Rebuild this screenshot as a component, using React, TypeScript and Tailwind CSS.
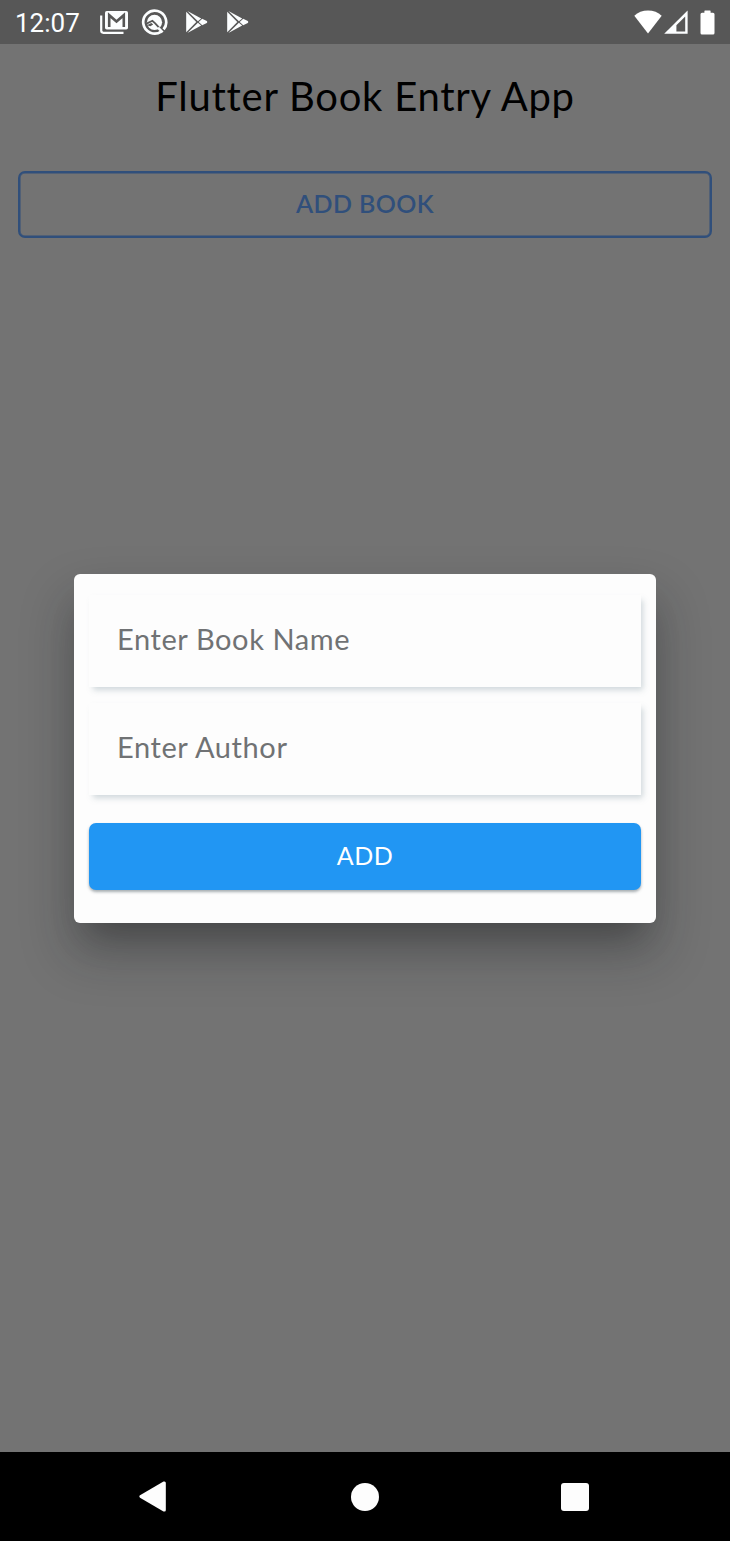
import React from "react";

function GalleryMailIcon() {
  return (
    <svg className="block h-6 w-[30px]" viewBox="0 0 30 24" fill="none" stroke="#fcfeff">
      <path d="M1.2 5.5V20.6Q1.2 22.8 3.4 22.8H23.5" strokeWidth="2.2" />
      <rect x="5" y="0.9" width="23" height="18.6" rx="1.8" fill="#fcfeff" stroke="none" />
      <path d="M9.2 17V5.2L16.5 11.6L23.8 5.2V17" stroke="#575757" strokeWidth="2.6" />
    </svg>
  );
}

function CircleIcon() {
  return (
    <svg className="block size-[27px]" viewBox="0 0 27 27" fill="none" stroke="#fcfeff">
      <path d="M20.2 22.6A11.5 11.5 0 1 1 22.6 20.4" strokeWidth="2.7" />
      <circle cx="13.5" cy="13.3" r="7.6" fill="#fcfeff" stroke="none" />
      <path d="M5.6 14.6L11.4 11.8L14.2 14.4L21.5 22.4" stroke="#575757" strokeWidth="1.8" />
      <path d="M5.8 16.2L10.4 14L12.2 15.6L9.4 17.2Z" fill="#575757" stroke="none" />
      <path d="M17 18.6L21.6 23.4" strokeWidth="2.6" />
    </svg>
  );
}

function PlayIcon() {
  return (
    <svg className="block h-[22px] w-[22px]" viewBox="0 0 22 22">
      <g fill="#fcfeff">
        <path d="M0.2 0.8L10.3 10.9L0.2 21.2Z" />
        <path d="M1.4 0.1L15.2 7.6L11.9 10.2Z" />
        <path d="M1.4 21.9L15.2 14.4L11.9 11.8Z" />
        <path d="M16.2 7.8L20.8 10.1Q21.8 11 20.8 11.9L16.2 14.2L12.7 11Z" />
      </g>
    </svg>
  );
}

function StatusBar() {
  return (
    <header className="flex h-11 shrink-0 items-center bg-[#575757] pr-[15px] pl-[15px] text-[#fcfeff]">
      <span className="w-[85px] pt-[2px] font-[Roboto,sans-serif] text-[26px] leading-[42px]">
        12:07
      </span>
      <GalleryMailIcon />
      <div className="ml-[11px]">
        <CircleIcon />
      </div>
      <div className="ml-[18px]">
        <PlayIcon />
      </div>
      <div className="ml-[19px]">
        <PlayIcon />
      </div>
      <svg className="ml-auto block h-6 w-[28px]" viewBox="0 0 28 24" fill="#fff">
        <path d="M0.3 5.8Q5.8 0.4 14 0.4T27.7 5.8L14 23.4Z" />
      </svg>
      <svg className="ml-[2px] block h-6 w-6" viewBox="0 0 24 24">
        <path d="M0.2 23.8L23.6 0.4V23.8Z" fill="#fcfeff" />
        <path d="M12.4 15.2L21.2 6.4V21.4H12.4Z" fill="#575757" />
      </svg>
      <svg className="ml-[12px] block h-[25px] w-[15px]" viewBox="0 0 15 25" fill="#fff">
        <path d="M5 0.5H10Q10.6 0.5 10.6 1.1V2.7H13Q14.5 2.7 14.5 4.2V23Q14.5 24.5 13 24.5H2Q0.5 24.5 0.5 23V4.2Q0.5 2.7 2 2.7H4.4V1.1Q4.4 0.5 5 0.5Z" />
      </svg>
    </header>
  );
}

function Field({ label }: { label: string }) {
  return (
    <div className="flex h-[92px] items-center bg-[#fdfdfd] pl-[28px] shadow-[3px_4px_6px_-1px_rgba(120,144,156,0.34)]">
      <span className="pb-[3px] text-[29px] leading-10 tracking-[0.6px] whitespace-nowrap text-[#707274]">
        {label}
      </span>
    </div>
  );
}

function BookDialog() {
  return (
    <section className="flex h-[349px] w-[582px] flex-col rounded-[6px] bg-[#fdfdfd] px-[15px] pt-[21px] shadow-[0_24px_34px_-16px_rgba(0,0,0,0.28),0_28px_50px_6px_rgba(20,25,30,0.24)]">
      <div className="flex flex-col gap-4">
        <Field label="Enter Book Name" />
        <Field label="Enter Author" />
      </div>
      <button className="mt-7 flex h-[67px] w-full items-center justify-center rounded-[7px] bg-[#2196f3] text-[25px] tracking-[0.5px] text-white shadow-[0_2px_3px_rgba(60,75,85,0.45)]">
        ADD
      </button>
    </section>
  );
}

function NavigationBar() {
  return (
    <nav className="flex h-[89px] shrink-0 items-center bg-black pl-[139px]">
      <svg className="block h-[31px] w-[28px]" viewBox="0 0 28 31" fill="#fdfdfd">
        <path d="M1 14.3L24.5 0.6Q26.8 -0.1 26.8 2V29Q26.8 31.1 24.5 30.4L1 16.7Q-0.3 15.5 1 14.3Z" />
      </svg>
      <span className="ml-[184px] size-7 rounded-full bg-[#fdfdfd]" />
      <span className="ml-[182px] size-7 rounded-[3px] bg-[#fdfdfd]" />
    </nav>
  );
}

export default function App() {
  return (
    <div className="flex h-[1541px] w-[730px] flex-col overflow-hidden bg-[#737373] font-[Lato,sans-serif]">
      <StatusBar />
      <main className="relative flex flex-1 flex-col px-[18px]">
        <h1 className="mt-[22px] h-[60px] text-center text-[40px] leading-[60px] tracking-[0.75px] whitespace-nowrap text-black">
          Flutter Book Entry App
        </h1>
        <button className="mt-[45px] flex h-[67px] w-full items-center justify-center rounded-[7px] border-2 border-[#304f7b] pb-[2px] text-[25px] font-semibold tracking-[0.4px] text-[#304f7b] shadow-[inset_0_0_0_0.5px_#304f7b]">
          ADD BOOK
        </button>
        <div className="absolute inset-0 flex items-center justify-center">
          <BookDialog />
        </div>
      </main>
      <NavigationBar />
    </div>
  );
}
